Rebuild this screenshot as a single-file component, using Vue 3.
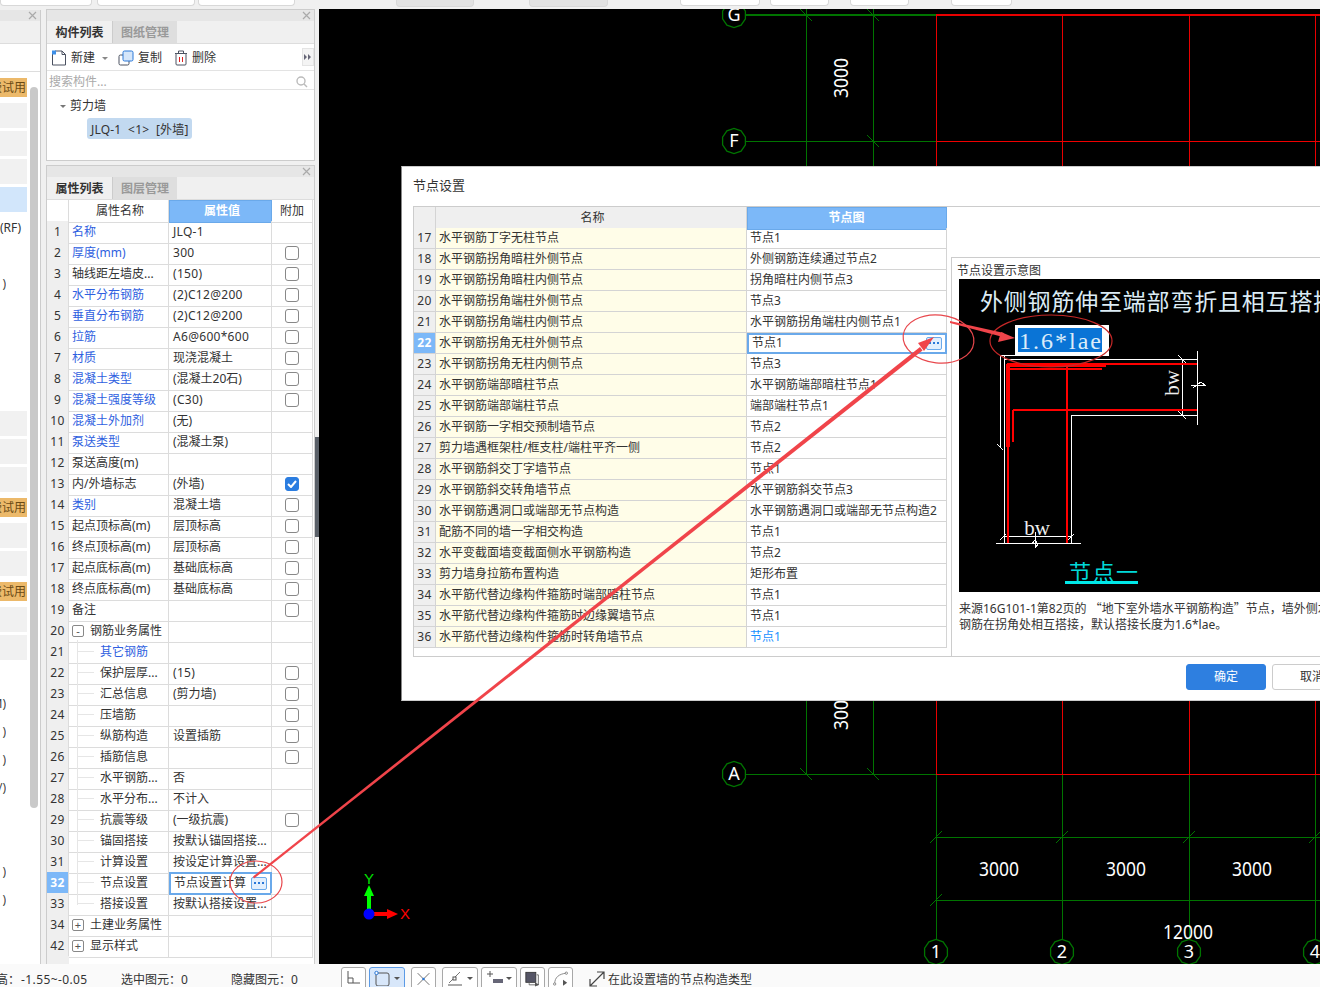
<script setup>
const topWidgets = [
  { w: 92, gap: 0, kind: 'input' },
  { w: 98, gap: 5, kind: 'input' },
  { w: 97, gap: 3, kind: 'input' },
  { w: 78, gap: 101, kind: 'flat' },
  { w: 79, gap: 55, kind: 'flat' },
  { w: 80, gap: 72, kind: 'input' },
  { w: 59, gap: 10, kind: 'input' },
  { w: 59, gap: 21, kind: 'input' },
  { w: 61, gap: 42, kind: 'input' }
]

const sideRows = [
  { kind: 'orange', text: '免费试用' },
  { kind: 'gray' }, { kind: 'gray' }, { kind: 'gray' }, { kind: 'blue' },
  { kind: 'text', text: '(RF)' }, { kind: 'text' }, { kind: 'tail', text: ')' },
  { kind: 'text' }, { kind: 'text' }, { kind: 'text' }, { kind: 'text' },
  { kind: 'gray' }, { kind: 'gray' }, { kind: 'gray' },
  { kind: 'orange', text: '免费试用' },
  { kind: 'gray' }, { kind: 'gray' },
  { kind: 'orange', text: '免费试用' },
  { kind: 'gray' }, { kind: 'gray' },
  { kind: 'text' }, { kind: 'tail', text: 'M)' }, { kind: 'tail', text: ')' },
  { kind: 'tail', text: ')' }, { kind: 'tail', text: '/)' }, { kind: 'text' }, { kind: 'text' },
  { kind: 'tail', text: ')' }, { kind: 'tail', text: ')' }
]

const props = [
  { no: 1, name: '名称', value: 'JLQ-1', link: true },
  { no: 2, name: '厚度(mm)', value: '300', link: true, check: false },
  { no: 3, name: '轴线距左墙皮...', value: '(150)', check: false },
  { no: 4, name: '水平分布钢筋', value: '(2)C12@200', link: true, check: false },
  { no: 5, name: '垂直分布钢筋', value: '(2)C12@200', link: true, check: false },
  { no: 6, name: '拉筋', value: 'A6@600*600', link: true, check: false },
  { no: 7, name: '材质', value: '现浇混凝土', link: true, check: false },
  { no: 8, name: '混凝土类型', value: '(混凝土20石)', link: true, check: false },
  { no: 9, name: '混凝土强度等级', value: '(C30)', link: true, check: false },
  { no: 10, name: '混凝土外加剂', value: '(无)', link: true },
  { no: 11, name: '泵送类型', value: '(混凝土泵)', link: true },
  { no: 12, name: '泵送高度(m)', value: '' },
  { no: 13, name: '内/外墙标志', value: '(外墙)', check: true },
  { no: 14, name: '类别', value: '混凝土墙', link: true, check: false },
  { no: 15, name: '起点顶标高(m)', value: '层顶标高', check: false },
  { no: 16, name: '终点顶标高(m)', value: '层顶标高', check: false },
  { no: 17, name: '起点底标高(m)', value: '基础底标高', check: false },
  { no: 18, name: '终点底标高(m)', value: '基础底标高', check: false },
  { no: 19, name: '备注', value: '', check: false },
  { no: 20, name: '钢筋业务属性', value: '', group: '-' },
  { no: 21, name: '其它钢筋', value: '', link: true, child: true },
  { no: 22, name: '保护层厚...', value: '(15)', child: true, check: false },
  { no: 23, name: '汇总信息', value: '(剪力墙)', child: true, check: false },
  { no: 24, name: '压墙筋', value: '', child: true, check: false },
  { no: 25, name: '纵筋构造', value: '设置插筋', child: true, check: false },
  { no: 26, name: '插筋信息', value: '', child: true, check: false },
  { no: 27, name: '水平钢筋...', value: '否', child: true },
  { no: 28, name: '水平分布...', value: '不计入', child: true },
  { no: 29, name: '抗震等级', value: '(一级抗震)', child: true, check: false },
  { no: 30, name: '锚固搭接', value: '按默认锚固搭接...', child: true },
  { no: 31, name: '计算设置', value: '按设定计算设置...', child: true },
  { no: 32, name: '节点设置', value: '节点设置计算', child: true, active: true },
  { no: 33, name: '搭接设置', value: '按默认搭接设置...', child: true, last: true },
  { no: 34, name: '土建业务属性', value: '', group: '+' },
  { no: 42, name: '显示样式', value: '', group: '+' }
]

const nodes = [
  [17, '水平钢筋丁字无柱节点', '节点1'],
  [18, '水平钢筋拐角暗柱外侧节点', '外侧钢筋连续通过节点2'],
  [19, '水平钢筋拐角暗柱内侧节点', '拐角暗柱内侧节点3'],
  [20, '水平钢筋拐角端柱外侧节点', '节点3'],
  [21, '水平钢筋拐角端柱内侧节点', '水平钢筋拐角端柱内侧节点1'],
  [22, '水平钢筋拐角无柱外侧节点', '节点1'],
  [23, '水平钢筋拐角无柱内侧节点', '节点3'],
  [24, '水平钢筋端部暗柱节点', '水平钢筋端部暗柱节点1'],
  [25, '水平钢筋端部端柱节点', '端部端柱节点1'],
  [26, '水平钢筋一字相交预制墙节点', '节点2'],
  [27, '剪力墙遇框架柱/框支柱/端柱平齐一侧', '节点2'],
  [28, '水平钢筋斜交丁字墙节点', '节点1'],
  [29, '水平钢筋斜交转角墙节点', '水平钢筋斜交节点3'],
  [30, '水平钢筋遇洞口或端部无节点构造', '水平钢筋遇洞口或端部无节点构造2'],
  [31, '配筋不同的墙一字相交构造', '节点1'],
  [32, '水平变截面墙变截面侧水平钢筋构造', '节点2'],
  [33, '剪力墙身拉筋布置构造', '矩形布置'],
  [34, '水平筋代替边缘构件箍筋时端部暗柱节点', '节点1'],
  [35, '水平筋代替边缘构件箍筋时边缘翼墙节点', '节点1'],
  [36, '水平筋代替边缘构件箍筋时转角墙节点', '节点1']
]

// drawing on the black canvas, in page coordinates
const gridX = [936, 1062, 1189, 1315]
const axes = [
  { label: 'G', x: 734, y: 15 },
  { label: 'F', x: 734, y: 141 },
  { label: 'A', x: 734, y: 774 },
  { label: '1', x: 936, y: 952 },
  { label: '2', x: 1062, y: 952 },
  { label: '3', x: 1189, y: 952 },
  { label: '4', x: 1315, y: 952 }
]
const backTicks = [[806, 15], [873, 15], [873, 141], [806, 774], [873, 774]]
const fwdTicks = [[936, 837], [1062, 837], [1189, 837], [1315, 837], [936, 900]]

function ringPoints(cx, cy) {
  const pts = []
  for (let i = 0; i < 10; i++) {
    const a = (i * Math.PI) / 5 + Math.PI / 10
    pts.push(`${(cx + 12 * Math.cos(a)).toFixed(1)},${(cy + 12.5 * Math.sin(a)).toFixed(1)}`)
  }
  return pts.join(' ')
}

// plain ascii values run a little wider than the default latin face
const isLatin = (v) => /^[\x20-\x7e]+$/.test(v)
</script>

<template>
  <div class="app">
    <div class="topbar">
      <div
        v-for="(t, i) in topWidgets"
        :key="i"
        class="top-widget"
        :class="t.kind"
        :style="{ width: t.w + 'px', marginLeft: t.gap + 'px' }"
      ></div>
    </div>

    <div class="main">
      <aside class="side">
        <div class="panel-head">
          <svg class="close" width="9" height="9" viewBox="0 0 9 9"><path d="M1 1l7 7M8 1L1 8" stroke="#aaa" stroke-width="1.2" /></svg>
        </div>
        <div class="side-tabs"></div>
        <div class="side-tools"></div>
        <div class="side-list">
          <div v-for="(r, i) in sideRows" :key="i" class="side-row">
            <div :class="'side-' + r.kind"><span>{{ r.text }}</span></div>
          </div>
        </div>
        <div class="side-scroll"></div>
      </aside>

      <div class="panels">
        <section class="panel list-panel">
          <div class="panel-head">
            <svg class="close" width="9" height="9" viewBox="0 0 9 9"><path d="M1 1l7 7M8 1L1 8" stroke="#aaa" stroke-width="1.2" /></svg>
          </div>
          <div class="tabs">
            <div class="tab on">构件列表</div>
            <div class="tab">图纸管理</div>
          </div>
          <div class="tools">
            <svg class="tool-icon" width="16" height="16" viewBox="0 0 16 16">
              <path d="M1.5 4v11h13V4.5L11 1H4" fill="#fff" stroke="#4a5160" />
              <path d="M11 1v3.5h3.5" fill="none" stroke="#4a5160" />
              <rect x="1" y="0.5" width="4" height="4" fill="#3d8fe8" />
            </svg>
            <span class="tool-text">新建</span>
            <i class="caret new-caret"></i>
            <svg class="tool-icon copy-icon" width="16" height="16" viewBox="0 0 16 16">
              <rect x="1" y="5" width="10" height="10" rx="1.5" fill="#fff" stroke="#4a5160" />
              <rect x="5" y="1" width="10" height="10" rx="1.5" fill="#d5e6fa" stroke="#2a78d8" />
            </svg>
            <span class="tool-text">复制</span>
            <svg class="tool-icon del-icon" width="14" height="16" viewBox="0 0 14 16">
              <path d="M1 3.5h12M4.5 3V1h5v2" fill="none" stroke="#4a5160" />
              <rect x="2" y="3.5" width="10" height="11.5" rx="1" fill="#fff" stroke="#4a5160" />
              <path d="M5.5 7v5M8.5 7v5" stroke="#e02020" />
            </svg>
            <span class="tool-text">删除</span>
            <div class="tool-more">
              <svg width="8" height="6" viewBox="0 0 8 6"><path d="M0 0l3 3-3 3zM4 0l3 3-3 3z" fill="#667" /></svg>
            </div>
          </div>
          <div class="search">
            <span>搜索构件...</span>
            <svg width="12" height="12" viewBox="0 0 12 12">
              <circle cx="5" cy="5" r="4" fill="none" stroke="#bbb" stroke-width="1.4" />
              <path d="M8 8l3 3" stroke="#bbb" stroke-width="1.4" />
            </svg>
          </div>
          <div class="tree">
            <div class="tree-root"><i class="caret tree-caret"></i>剪力墙</div>
            <div class="tree-chip">JLQ-1&nbsp; &lt;1&gt;&nbsp; [外墙]</div>
          </div>
        </section>

        <section class="panel prop-panel">
          <div class="panel-head">
            <svg class="close" width="9" height="9" viewBox="0 0 9 9"><path d="M1 1l7 7M8 1L1 8" stroke="#aaa" stroke-width="1.2" /></svg>
          </div>
          <div class="tabs">
            <div class="tab on">属性列表</div>
            <div class="tab">图层管理</div>
          </div>
          <div class="prop-row prop-header">
            <div class="c-no"></div>
            <div class="c-name">属性名称</div>
            <div class="c-val head-on">属性值</div>
            <div class="c-add">附加</div>
          </div>
          <div v-for="p in props" :key="p.no" class="prop-row">
            <div class="c-no" :class="{ 'no-on': p.active }">{{ p.no }}</div>
            <div
              class="c-name"
              :class="{ link: p.link, child: p.child, last: p.last, grouped: p.group }"
            >
              <span v-if="p.group" class="group-box">{{ p.group }}</span>
              {{ p.name }}
            </div>
            <div v-if="p.active" class="c-val val-active">
              <span>{{ p.value }}</span>
              <span class="dots">
                <svg width="10" height="2" viewBox="0 0 10 2"><path d="M0 0h2v2H0zM4 0h2v2H4zM8 0h2v2H8z" fill="#2a78d8" /></svg>
              </span>
            </div>
            <div v-else class="c-val" :class="{ latin: isLatin(p.value) }">{{ p.value }}</div>
            <div class="c-add">
              <span v-if="p.check === false" class="check"></span>
              <span v-else-if="p.check" class="check checked">
                <svg width="10" height="8" viewBox="0 0 10 8"><path d="M1 4l3 3 5-6" fill="none" stroke="#fff" stroke-width="2" /></svg>
              </span>
            </div>
          </div>
          <div class="prop-foot"></div>
        </section>
      </div>

      <div class="splitter"><div class="split-handle"></div></div>

      <div class="canvas">
        <svg class="cad" width="1001" height="955" viewBox="319 9 1001 955">
          <g stroke="#007400" fill="none" shape-rendering="crispEdges">
            <path d="M806 9V774M873 9V774" />
            <path d="M746 15H936" stroke-width="2" />
            <path d="M746 141H936M746 774H936" />
            <path v-for="x in gridX" :key="x" :d="`M${x} 774V940`" />
            <path d="M936 837H1320M936 900H1320" />
            <path v-for="t in backTicks" :key="'b' + t[0] + t[1]" :d="`M${t[0] - 6} ${t[1] - 6}l12 12`" />
            <path v-for="t in fwdTicks" :key="'f' + t[0] + t[1]" :d="`M${t[0] - 6} ${t[1] + 6}l12 -12`" />
          </g>
          <g stroke="#e80000" fill="none" shape-rendering="crispEdges">
            <path d="M936 15H1320" stroke-width="2" />
            <path d="M936 141H1320M936 774H1320" stroke="#f00000" />
            <path v-for="x in gridX" :key="x" :d="`M${x} 15V774`" />
          </g>
          <g class="cad-text">
            <text x="841" y="85" text-anchor="middle" transform="rotate(-90 841 78)" textLength="40" lengthAdjust="spacingAndGlyphs">3000</text>
            <text x="841" y="717" text-anchor="middle" transform="rotate(-90 841 710)" textLength="40" lengthAdjust="spacingAndGlyphs">3000</text>
            <text x="999" y="876" text-anchor="middle" textLength="40" lengthAdjust="spacingAndGlyphs">3000</text>
            <text x="1126" y="876" text-anchor="middle" textLength="40" lengthAdjust="spacingAndGlyphs">3000</text>
            <text x="1252" y="876" text-anchor="middle" textLength="40" lengthAdjust="spacingAndGlyphs">3000</text>
            <text x="1188" y="939" text-anchor="middle" textLength="50" lengthAdjust="spacingAndGlyphs">12000</text>
          </g>
          <g v-for="a in axes" :key="a.label">
            <polygon :points="ringPoints(a.x, a.y)" fill="#000" stroke="#007400" stroke-width="1.3" />
            <text class="axis-label" :x="a.x" :y="a.y + 6" text-anchor="middle">{{ a.label }}</text>
          </g>
          <rect x="367" y="894" width="4" height="18" fill="#00ff00" />
          <path d="M369 885l-5 11h10z" fill="#00ff00" />
          <rect x="372" y="912" width="16" height="4" fill="#ff0000" />
          <path d="M398 914l-11 -5v10z" fill="#ff0000" />
          <circle cx="369" cy="914" r="5.5" fill="#0000ff" />
          <text class="axis-y" x="369" y="884" text-anchor="middle">Y</text>
          <text class="axis-x" x="405" y="919" text-anchor="middle">X</text>
        </svg>
      </div>
    </div>

    <div class="status">
      <span class="st st-h">高：</span>
      <span class="st st-range">-1.55~-0.05</span>
      <span class="st st-sel">选中图元：0</span>
      <span class="st st-hid">隐藏图元：0</span>
      <div class="st-btn b1">
        <svg width="14" height="16" viewBox="0 0 14 16"><path d="M2 1v12h12M2 8h5v5" fill="none" stroke="#555" /></svg>
      </div>
      <div class="st-btn b2 on">
        <svg width="16" height="16" viewBox="0 0 16 16">
          <rect x="2" y="3" width="13" height="13" rx="2" fill="none" stroke="#555" />
          <circle cx="2.5" cy="3" r="1.7" fill="#fff" stroke="#2a78d8" />
        </svg>
        <i class="caret"></i>
      </div>
      <div class="st-btn b3">
        <svg width="18" height="18" viewBox="0 0 18 18">
          <path d="M2 2l14 14M16 2L2 16" stroke="#555" />
          <circle cx="9" cy="9" r="1.5" fill="#2a78d8" />
        </svg>
      </div>
      <div class="st-btn b4">
        <svg width="16" height="16" viewBox="0 0 16 16">
          <path d="M2 13L13 2" stroke="#777" />
          <path d="M1 15h14" stroke="#aaa" stroke-width="2" />
          <rect x="6" y="7" width="3" height="3" fill="#fff" stroke="#555" />
        </svg>
        <i class="caret"></i>
      </div>
      <div class="st-btn b5">
        <svg width="18" height="16" viewBox="0 0 18 16">
          <path d="M4 1v6M1 4h6" stroke="#555" />
          <rect x="7" y="9" width="10" height="4" fill="#667" />
        </svg>
        <i class="caret"></i>
      </div>
      <div class="st-btn b6">
        <svg width="18" height="18" viewBox="0 0 18 18">
          <rect x="1" y="1" width="12" height="12" fill="#556" stroke="#333" />
          <path d="M14 4h2v12H5v-2" fill="none" stroke="#555" />
          <path d="M12 13l5 3-5 2z" fill="#555" />
        </svg>
      </div>
      <div class="st-btn b7">
        <svg width="18" height="18" viewBox="0 0 18 18">
          <path d="M2 15C2 7 7 3 16 2" fill="none" stroke="#777" />
          <circle cx="2" cy="15" r="1.4" fill="#fff" stroke="#777" />
          <circle cx="16" cy="2" r="1.4" fill="#fff" stroke="#777" />
          <path d="M12 10l5 3.5-5 3.5z" fill="#555" />
        </svg>
      </div>
      <svg class="st-resize" width="16" height="16" viewBox="0 0 16 16">
        <path d="M1 15L15 1M8 1h7v7M1 8v7h7" fill="none" stroke="#444" stroke-width="1.2" />
      </svg>
      <span class="st st-hint">在此设置墙的节点构造类型</span>
    </div>

    <div class="dialog">
      <div class="dlg-title">节点设置</div>
      <div class="dlg-frame">
        <div class="node-table">
          <div class="node-row node-header">
            <div class="n-no"></div>
            <div class="n-name">名称</div>
            <div class="n-val head-on">节点图</div>
          </div>
          <div v-for="n in nodes" :key="n[0]" class="node-row">
            <div class="n-no" :class="{ 'no-on': n[0] === 22 }">{{ n[0] }}</div>
            <div class="n-name">{{ n[1] }}</div>
            <div v-if="n[0] === 22" class="n-val val-active">
              <span>{{ n[2] }}</span>
              <span class="dots">
                <svg width="10" height="2" viewBox="0 0 10 2"><path d="M0 0h2v2H0zM4 0h2v2H4zM8 0h2v2H8z" fill="#2a78d8" /></svg>
              </span>
            </div>
            <div v-else class="n-val" :class="{ 'val-link': n[0] === 36 }">{{ n[2] }}</div>
          </div>
        </div>
        <div class="preview">
          <div class="preview-title">节点设置示意图</div>
          <svg class="sketch" width="400" height="313" viewBox="959 279 400 313">
            <rect x="959" y="279" width="400" height="313" fill="#000" />
            <text class="sk-title" x="980" y="310">外侧钢筋伸至端部弯折且相互搭接</text>
            <g stroke="#fff" fill="none" shape-rendering="crispEdges">
              <path d="M1000 355H1016M1000 355V447M1004 355V543M1004 359H1197M1197 351V425M1182 359V416M1071 415H1197M1071 415V543M996 543H1081M1004 536H1071" />
              <path d="M997 444l6 6M1178 355l8 8M1178 411l8 8M1000 540l6 -6M1068 540l6 -6" />
              <path d="M1035 532V548l3 -4-3 -4-3 4M1191 385h14l-4 -3-4 3-4 3" />
            </g>
            <g stroke="#f00" fill="none" shape-rendering="crispEdges">
              <path d="M1007 364H1197M1008 364V543" stroke-width="2" />
              <path d="M1007 365.5H1106" stroke-width="3" />
              <path d="M1007 369H1102M1067 366V543M1013 410H1197M1013 410V442" stroke-width="2" />
              <path d="M1008 364V447" stroke-width="4" />
            </g>
            <text class="sk-bw" x="1037" y="535" text-anchor="middle">bw</text>
            <text class="sk-bw" x="1173" y="389" text-anchor="middle" transform="rotate(-90 1173 383)">bw</text>
            <rect x="1015" y="325" width="94" height="31" fill="#fff" />
            <rect x="1018" y="328" width="84" height="24" fill="#0a74d6" />
            <text class="sk-sel" x="1019" y="349" textLength="82" lengthAdjust="spacing">1.6*lae</text>
            <text class="sk-node" x="1069" y="580" textLength="69">节点一</text>
            <rect x="1065" y="581" width="73" height="3" fill="#00e8e8" />
          </svg>
          <div class="preview-desc">
            <div>来源16G101-1第82页的 <span class="cjk-q">“</span>地下室外墙水平钢筋构造<span class="cjk-q">”</span>节点，墙外侧水平</div>
            <div>钢筋在拐角处相互搭接，默认搭接长度为1.6*lae。</div>
          </div>
        </div>
      </div>
      <div class="dlg-actions">
        <button class="btn primary">确定</button>
        <button class="btn">取消</button>
      </div>
    </div>

    <svg class="marks" width="1320" height="987" viewBox="0 0 1320 987">
      <g fill="none" stroke="#e8474c" stroke-width="1.2">
        <ellipse cx="256" cy="882" rx="26" ry="21" />
        <ellipse cx="938.5" cy="339" rx="35.5" ry="24" transform="rotate(6 938.5 339)" />
        <ellipse cx="1051" cy="341" rx="61" ry="26" stroke="#c62828" />
      </g>
      <path d="M253 876.5L920 347l2.5 3.5L254 878.5z" fill="#f0444a" />
      <path d="M934 337l-16 6 6 8z" fill="#f0444a" />
      <path d="M950 321L1004 333l-1 4L950 323z" fill="#f0444a" />
      <path d="M1015 338l-14 -6 -3 10z" fill="#f0444a" />
    </svg>
  </div>
</template>

<style>
html, body {
  margin: 0;
  background: #f0f0f0;
}
</style>

<style scoped>
.app {
  position: relative;
  width: 1320px;
  height: 987px;
  overflow: hidden;
  display: flex;
  flex-direction: column;
  background: #f0f0f0;
  color: #333;
  font: 12px/1 "Noto Sans", "Noto Sans CJK SC", sans-serif;
}

/* top strip, only its bottom edge is on screen */
.topbar {
  height: 9px;
  display: flex;
  flex: none;
  overflow: hidden;
}

.top-widget {
  height: 6px;
  flex: none;
  border-radius: 0 0 4px 4px;
  background: #fff;
  border: 1px solid #d8d8d8;
  border-top: 0;
  box-sizing: border-box;
}

.top-widget.flat {
  background: #e2e2e2;
  height: 7px;
}

.main {
  flex: none;
  height: 955px;
  display: flex;
}

.panel-head {
  height: 11px;
  background: #e6e6e6;
  position: relative;
}

.close {
  position: absolute;
  right: 3px;
  top: 1px;
}

/* left strip */
.side {
  position: relative;
  width: 41px;
  margin: 1px 5px 0 0;
  background: #fff;
  border-right: 1px solid #ccc;
  box-sizing: border-box;
  flex: none;
  overflow: hidden;
}

.side-tabs {
  height: 22px;
  background: #f0f0f0;
  border-bottom: 1px solid #ddd;
}

.side-tools {
  height: 27px;
  border-bottom: 1px solid #ddd;
}

.side-list {
  padding-top: 3px;
}

.side-row {
  height: 28px;
  width: 27px;
  display: flow-root;
}

.side-gray {
  height: 25px;
  background: #f1f1f1;
}

.side-blue {
  height: 25px;
  background: #d2e6fb;
}

.side-orange {
  height: 19px;
  margin-top: 3px;
  padding-right: 1px;
  box-sizing: border-box;
  background: #ecb96a;
  color: #6b4a14;
  line-height: 19px;
  display: flex;
  justify-content: flex-end;
  white-space: nowrap;
  overflow: hidden;
}

.side-orange span {
  flex: none;
}

.side-text {
  height: 25px;
  line-height: 26px;
  white-space: nowrap;
}

/* names cut off by the strip's left edge */
.side-tail {
  width: 6px;
  height: 25px;
  line-height: 26px;
  display: flex;
  justify-content: flex-end;
  white-space: nowrap;
  overflow: hidden;
  color: #444;
}

.side-tail span {
  flex: none;
}

.side-scroll {
  position: absolute;
  left: 30px;
  top: 77px;
  width: 8px;
  height: 721px;
  background: #c9c9c9;
  border-radius: 4px;
}

/* property column */
.panels {
  width: 269px;
  flex: none;
  display: flex;
  flex-direction: column;
  gap: 4px;
}

.panel {
  background: #fff;
  border: 1px solid #ccc;
  box-sizing: border-box;
  display: flex;
  flex-direction: column;
}

.list-panel {
  height: 152px;
  margin-top: 0;
}

.prop-panel {
  flex: 1;
  min-height: 0;
  border-bottom: 0;
}

.tabs {
  height: 23px;
  flex: none;
  display: flex;
  background: #f0f0f0;
  box-sizing: border-box;
  border-bottom: 1px solid #ddd;
}

.tab {
  width: 65px;
  line-height: 24px;
  text-align: center;
  color: #999;
  background: #dedede;
  font-weight: 700;
  border-left: 1px solid #ccc;
  box-sizing: border-box;
}

.tab.on {
  color: #333;
  background: #f0f0f0;
  border: 0;
}

.tools {
  height: 27px;
  flex: none;
  display: flex;
  align-items: center;
  padding: 2px 0 0 4px;
  box-sizing: border-box;
  border-bottom: 1px solid #e3e3e3;
  position: relative;
}

.tool-icon {
  flex: none;
}

.tool-text {
  margin-left: 4px;
  white-space: nowrap;
}

.caret {
  display: inline-block;
  width: 0;
  height: 0;
  border-left: 3px solid transparent;
  border-right: 3px solid transparent;
  border-top: 3px solid #888;
}

.new-caret {
  margin-left: 7px;
}

.copy-icon {
  margin-left: 10px;
}

.del-icon {
  margin-left: 12px;
}

.tool-more {
  position: absolute;
  right: 0;
  top: 4px;
  width: 12px;
  height: 18px;
  display: flex;
  align-items: center;
  justify-content: center;
  background: #f4f4f4;
  border: 1px solid #e4e4e4;
  box-sizing: border-box;
}

.search {
  height: 19px;
  flex: none;
  display: flex;
  align-items: center;
  justify-content: space-between;
  padding: 3px 6px 0 2px;
  box-sizing: border-box;
  color: #aaa;
  border-bottom: 1px solid #e3e3e3;
}

.tree {
  flex: 1;
  padding: 8px 0 0 13px;
  background: #fff;
}

.tree-root {
  display: flex;
  align-items: center;
  gap: 4px;
  height: 16px;
}

.tree-caret {
  border-top-color: #777;
}

.tree-chip {
  margin: 4px 0 0 27px;
  width: 105px;
  height: 21px;
  line-height: 23px;
  padding-left: 4px;
  box-sizing: border-box;
  background: #c2d9f0;
  border-radius: 3px;
  white-space: nowrap;
  letter-spacing: 0.2px;
}

.prop-row {
  display: grid;
  grid-template-columns: 22px 100px 103px 41px;
  height: 21px;
  flex: none;
}

.prop-row > div {
  border-right: 1px solid #dcdcdc;
  border-bottom: 1px solid #dcdcdc;
  box-sizing: border-box;
  line-height: 22px;
  white-space: nowrap;
  min-width: 0;
}

.c-no {
  background: #efefef;
  text-align: center;
  letter-spacing: 0.3px;
}

.c-name {
  padding-left: 3px;
  position: relative;
}

.prop-header .c-name,
.prop-header .c-add {
  text-align: center;
}

.prop-header .c-no {
  background: #fff;
}

.head-on {
  background: #7cb8f8;
  color: #fff;
  font-weight: 700;
  text-align: center;
  outline: 1px solid #6aa9ea;
  outline-offset: -1px;
}

.prop-row > .no-on,
.node-row > .no-on {
  background: #7cb8f8;
  color: #fff;
  font-weight: 700;
}

.link {
  color: #2f5fe0;
}

.c-name.child {
  padding-left: 31px;
}

.c-name.child::before {
  content: "";
  position: absolute;
  left: 8px;
  top: -1px;
  bottom: -1px;
  border-left: 1px solid #e6e6e6;
}

.c-name.child.last::before {
  bottom: 10px;
}

.c-name.child::after {
  content: "";
  position: absolute;
  left: 9px;
  top: 10px;
  width: 16px;
  border-top: 1px solid #e6e6e6;
}

.c-name.grouped {
  padding-left: 3px;
  display: flex;
  align-items: center;
  gap: 6px;
  overflow: visible;
}

.group-box {
  width: 12px;
  height: 12px;
  flex: none;
  border: 1px solid #888;
  border-radius: 2px;
  box-sizing: border-box;
  line-height: 9px;
  text-align: center;
  font-size: 11px;
  color: #555;
}

.c-val {
  padding-left: 4px;
}

.latin {
  letter-spacing: 0.3px;
}

.prop-row > .val-active,
.node-row > .val-active {
  display: flex;
  align-items: center;
  justify-content: space-between;
  outline: 2px solid #6aa9ea;
  outline-offset: -2px;
  padding: 0 4px 0 5px;
}

.dots {
  width: 16px;
  height: 13px;
  border: 1px solid #6aa9ea;
  border-radius: 2px;
  background: #e2effd;
  box-sizing: border-box;
  display: flex;
  align-items: center;
  justify-content: center;
}

.c-add {
  display: flex;
  align-items: center;
  justify-content: center;
}

.check {
  width: 14px;
  height: 14px;
  border: 1px solid #888;
  border-radius: 3px;
  box-sizing: border-box;
  display: flex;
  align-items: center;
  justify-content: center;
  background: #fff;
}

.check.checked {
  background: #2b7de0;
  border-color: #2b7de0;
}

.prop-foot {
  flex: 1;
  width: 22px;
  background: #efefef;
}

.splitter {
  width: 4px;
  flex: none;
  position: relative;
  background: #f0f0f0;
}

.split-handle {
  position: absolute;
  left: 0;
  top: 428px;
  width: 4px;
  height: 100px;
  background: #5a6068;
}

.canvas {
  flex: 1;
  background: #000;
  overflow: hidden;
}

.cad {
  display: block;
}

.cad-text text {
  fill: #fff;
  font: 20px "Noto Sans", sans-serif;
}

.axis-label {
  fill: #fff;
  font: 18px "Noto Sans", sans-serif;
}

.axis-y {
  fill: #00e000;
  font: 15px "Liberation Sans", sans-serif;
}

.axis-x {
  fill: #f00;
  font: 15px "Liberation Sans", sans-serif;
}

/* status bar */
.status {
  flex: none;
  height: 23px;
  position: relative;
  background: #fafafa;
  overflow: hidden;
}

.st {
  position: absolute;
  top: 9px;
  white-space: nowrap;
  line-height: 14px;
}

.st-h {
  left: -4px;
}

.st-range {
  left: 21px;
  letter-spacing: 0.4px;
}

.st-sel {
  left: 121px;
}

.st-hid {
  left: 231px;
}

.st-hint {
  left: 608px;
}

.st-btn {
  position: absolute;
  top: 3px;
  height: 24px;
  box-sizing: border-box;
  border: 1px solid #a8a8a8;
  border-radius: 3px;
  background: #fff;
  display: flex;
  align-items: flex-start;
  justify-content: space-between;
  padding: 2px 4px 0;
}

.st-btn .caret {
  margin-top: 7px;
  border-top-color: #555;
}

.st-btn.on {
  border-color: #5a9ae6;
  background: #d8e7fa;
}

.b1 { left: 341px; width: 25px; }
.b2 { left: 369px; width: 36px; }
.b3 { left: 411px; width: 25px; }
.b4 { left: 442px; width: 36px; }
.b5 { left: 481px; width: 36px; }
.b6 { left: 520px; width: 25px; }
.b7 { left: 548px; width: 25px; }

.st-resize {
  position: absolute;
  left: 589px;
  top: 7px;
}

/* node settings dialog */
.dialog {
  position: absolute;
  left: 401px;
  top: 166px;
  width: 960px;
  height: 535px;
  box-sizing: border-box;
  padding-left: 11px;
  background: #fff;
  border-left: 1px solid #888;
  border-top: 1px solid #ccc;
  border-bottom: 1px solid #ccc;
}

.dlg-title {
  height: 39px;
  line-height: 36px;
  font-size: 13px;
}

.dlg-frame {
  display: flex;
  height: 451px;
  box-sizing: border-box;
  border: 1px solid #ccc;
  border-right: 0;
}

.node-table {
  width: 533px;
  flex: none;
  align-self: flex-start;
}

.node-row {
  display: grid;
  grid-template-columns: 22px 311px 200px;
  height: 21px;
}

.node-row > div {
  box-sizing: border-box;
  border-right: 1px solid #d4d4d4;
  border-bottom: 1px solid #d4d4d4;
  line-height: 20px;
  white-space: nowrap;
  padding-left: 3px;
  min-width: 0;
}

.node-header > div {
  line-height: 22px;
}

.node-row > .n-no {
  background: #efefef;
  text-align: center;
  padding-left: 0;
  letter-spacing: 0.3px;
}

.node-row > .no-on {
  background: #7cb8f8;
}

.n-name {
  background: #fffde8;
}

.node-header .n-name {
  background: #efefef;
  text-align: center;
}

.node-header .n-val {
  padding-left: 0;
}

.val-link {
  color: #1890ff;
}

.preview {
  margin: 50px 0 0 4px;
  border-left: 1px solid #ccc;
  border-top: 1px solid #ccc;
  padding-left: 7px;
  flex: 1;
  min-width: 0;
}

.preview-title {
  height: 21px;
  line-height: 25px;
  margin-left: -2px;
  white-space: nowrap;
}

.sketch {
  display: block;
}

.sk-title {
  fill: #dcecf5;
  font: 23px "Noto Sans CJK SC", sans-serif;
  letter-spacing: 0.8px;
}

.sk-bw {
  fill: #eee;
  font: 21px "Liberation Serif", serif;
}

.sk-sel {
  fill: #dcecfa;
  font: 24px "Liberation Serif", serif;
}

.sk-node {
  fill: #00d8d8;
  font: 22px "Noto Sans CJK SC", sans-serif;
}

.preview-desc {
  margin-top: 8px;
  line-height: 16px;
  white-space: nowrap;
  overflow: hidden;
}

.cjk-q {
  font-family: "Noto Sans CJK SC", sans-serif;
}

.dlg-actions {
  display: flex;
  gap: 6px;
  margin: 7px 0 0 773px;
}

.btn {
  width: 80px;
  height: 26px;
  flex: none;
  box-sizing: border-box;
  border: 1px solid #ccc;
  border-radius: 3px;
  background: #fff;
  color: #333;
  font: inherit;
}

.btn.primary {
  background: #2e7fe0;
  border-color: #2e7fe0;
  color: #fff;
}

.marks {
  position: absolute;
  left: 0;
  top: 0;
  pointer-events: none;
}
</style>
